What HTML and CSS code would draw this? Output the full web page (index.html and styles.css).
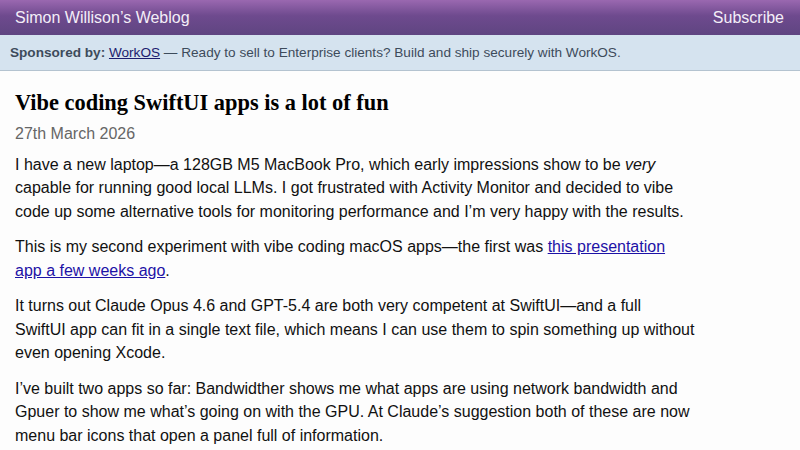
FILE: index.html
```
<!DOCTYPE html>
<html>
<head>
<meta charset="utf-8">
<link rel="stylesheet" href="styles.css">
</head>
<body>
<header class="masthead">
  <a class="site-title" href="#">Simon Willison’s Weblog</a>
  <a class="subscribe" href="#">Subscribe</a>
</header>
<div class="sponsor"><strong>Sponsored by:</strong> <a href="#">WorkOS</a> — Ready to sell to Enterprise clients? Build and ship securely with WorkOS.</div>
<main class="content">
  <h1 class="title">Vibe coding SwiftUI apps is a lot of fun</h1>
  <p class="date">27th March 2026</p>
  <p>I have a new laptop—a 128GB M5 MacBook Pro, which early impressions show to be <em>very</em> capable for running good local LLMs. I got frustrated with Activity Monitor and decided to vibe code up some alternative tools for monitoring performance and I’m very happy with the results.</p>
  <p>This is my second experiment with vibe coding macOS apps—the first was <a href="#">this presentation app a few weeks ago</a>.</p>
  <p>It turns out Claude Opus 4.6 and GPT-5.4 are both very competent at SwiftUI—and a full SwiftUI app can fit in a single text file, which means I can use them to spin something up without even opening Xcode.</p>
  <p>I’ve built two apps so far: Bandwidther shows me what apps are using network bandwidth and Gpuer to show me what’s going on with the GPU. At Claude’s suggestion both of these are now menu bar icons that open a panel full of information.</p>
</main>
</body>
</html>
```
FILE: styles.css
```
html, body {
  margin: 0;
  padding: 0;
}
body {
  background: #fdfdfd;
  font-family: "Liberation Sans", Arial, sans-serif;
  color: #111;
}
.masthead {
  height: 35px;
  box-sizing: border-box;
  padding: 0 16px 0 15px;
  display: flex;
  align-items: center;
  justify-content: space-between;
  background: linear-gradient(to bottom, #9a68b0 0%, #6e4a8e 45%, #5f4581 100%);
}
.masthead a {
  color: #f4eef8;
  text-decoration: none;
  font-size: 16px;
}
.sponsor {
  background: #d5e3ef;
  border-bottom: 1px solid #b4c3d0;
  color: #3d4b5b;
  font-size: 13.6px;
  line-height: 35px;
  height: 36px;
  box-sizing: border-box;
  padding: 0 10px;
}
.sponsor strong {
  font-weight: bold;
}
.sponsor a {
  color: #1c1c6e;
}
.content {
  width: 680px;
  padding: 0 15px;
}
.title {
  font-family: "Liberation Serif", "Times New Roman", serif;
  font-size: 22.4px;
  font-weight: bold;
  margin: 17px 0 0;
  line-height: 30px;
  color: #000;
}
.date {
  color: #666;
  margin: 4px 0 7px;
}
p {
  font-size: 16px;
  line-height: 23.5px;
  margin: 0 0 12px;
}
p a {
  color: #1d12a6;
}
```
